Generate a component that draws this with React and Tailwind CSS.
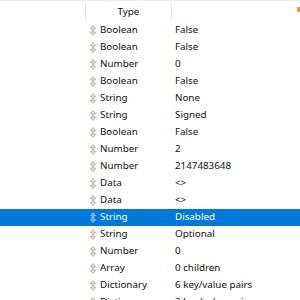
import React from "react";

const rows = [
  ["Boolean", "False"],
  ["Boolean", "False"],
  ["Number", "0"],
  ["Boolean", "False"],
  ["String", "None"],
  ["String", "Signed"],
  ["Boolean", "False"],
  ["Number", "2"],
  ["Number", "2147483648"],
  ["Data", "<>"],
  ["Data", "<>"],
  ["String", "Disabled"],
  ["String", "Optional"],
  ["Number", "0"],
  ["Array", "0 children"],
  ["Dictionary", "6 key/value pairs"],
  ["Dictionary", "3 key/value pairs"],
];

function UpDown({ selected }) {
  return (
    <svg width="6" height="11" viewBox="0 0 6 11" className="shrink-0">
      <path
        d="M3 0.5 L5.5 3.5 L4 3.5 L4 7.5 L5.5 7.5 L3 10.5 L0.5 7.5 L2 7.5 L2 3.5 L0.5 3.5 Z"
        fill={selected ? "#6aa6e0" : "#efe2d6"}
        stroke={selected ? "#9cc4ee" : "#aaa29c"}
        strokeWidth="0.8"
      />
    </svg>
  );
}

export default function App() {
  return (
    <div
      className="w-[300px] h-[300px] overflow-hidden bg-white text-[9.8px] text-[#111]"
      style={{ fontFamily: '"Noto Sans", "Open Sans", sans-serif' }}
    >
      <div className="h-[22px] flex items-center border-t border-[#ececec] relative">
        <div className="w-[86px] h-[18px] border-r border-[#e5e5e5]" />
        <div className="w-[86px] h-[18px] pt-[1px] border-r border-[#e5e5e5] flex items-center justify-center">
          Type
        </div>
        <div className="flex-1" />
        <div className="absolute right-0 top-[6px] w-[3px] h-[5px] bg-[#e8a33a]" />
      </div>
      {rows.map(([t, v], i) => {
        const sel = i === 11;
        return (
          <div
            key={i}
            className={`h-[17px] flex items-center ${sel ? "bg-[#0078d7] text-white" : ""}`}
          >
            <div className="w-[90px] shrink-0" />
            <div className="w-[85px] shrink-0 flex items-center gap-[4px]">
              <UpDown selected={sel} />
              <span>{t}</span>
            </div>
            <div className="flex-1 whitespace-nowrap">{v}</div>
          </div>
        );
      })}
    </div>
  );
}
